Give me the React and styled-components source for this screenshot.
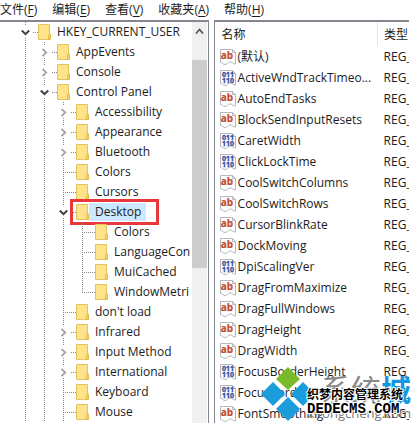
import React from "react";
import styled, { createGlobalStyle } from "styled-components";

const menus = [
  { label: "文件", accessKey: "F" },
  { label: "编辑", accessKey: "E" },
  { label: "查看", accessKey: "V" },
  { label: "收藏夹", accessKey: "A" },
  { label: "帮助", accessKey: "H" },
];

// cells: one entry per indent level, the last one belongs to the key itself
const keys = [
  { name: "HKEY_CURRENT_USER", cells: ["open"] },
  { name: "AppEvents", cells: ["line", "closed"] },
  { name: "Console", cells: ["line", "closed"] },
  { name: "Control Panel", cells: ["line", "open"] },
  { name: "Accessibility", cells: ["line", "line", "closed"] },
  { name: "Appearance", cells: ["line", "line", "closed"] },
  { name: "Bluetooth", cells: ["line", "line", "closed"] },
  { name: "Colors", cells: ["line", "line", "leaf"] },
  { name: "Cursors", cells: ["line", "line", "leaf"] },
  { name: "Desktop", cells: ["line", "line", "open"], selected: true },
  { name: "Colors", cells: ["line", "line", "line", "leaf"] },
  { name: "LanguageCon", cells: ["line", "line", "line", "leaf"] },
  { name: "MuiCached", cells: ["line", "line", "line", "leaf"] },
  { name: "WindowMetri", cells: ["line", "line", "line", "last"] },
  { name: "don't load", cells: ["line", "line", "leaf"] },
  { name: "Infrared", cells: ["line", "line", "closed"] },
  { name: "Input Method", cells: ["line", "line", "closed"] },
  { name: "International", cells: ["line", "line", "closed"] },
  { name: "Keyboard", cells: ["line", "line", "leaf"] },
  { name: "Mouse", cells: ["line", "line", "leaf"] },
];

const values = [
  { name: "(默认)" },
  { name: "ActiveWndTrackTimeo...", binary: true },
  { name: "AutoEndTasks" },
  { name: "BlockSendInputResets" },
  { name: "CaretWidth", binary: true },
  { name: "ClickLockTime", binary: true },
  { name: "CoolSwitchColumns" },
  { name: "CoolSwitchRows" },
  { name: "CursorBlinkRate" },
  { name: "DockMoving" },
  { name: "DpiScalingVer", binary: true },
  { name: "DragFromMaximize" },
  { name: "DragFullWindows" },
  { name: "DragHeight" },
  { name: "DragWidth" },
  { name: "FocusBorderHeight", binary: true },
  { name: "FocusBorderWidth", binary: true },
  { name: "FontSmoothing" },
];

function Chevron({ open }) {
  return (
    <svg width="9" height="9" viewBox="0 0 9 9" fill="none">
      {open ? (
        <path d="M0.8 2.5 L4.5 6.2 L8.2 2.5" stroke="#404040" strokeWidth="2" />
      ) : (
        <path d="M2.5 0.8 L6.2 4.5 L2.5 8.2" stroke="#a6a6a6" strokeWidth="1.9" />
      )}
    </svg>
  );
}

function FolderIcon() {
  return (
    <FolderSvg width="13" height="16" viewBox="0 0 13 16">
      <path d="M0.5 0.5 H11.5 V10 L12.5 11 V15.5 H0.5 Z" fill="#ffe38a" stroke="#e3c45c" />
      <path d="M10.5 15 V11 L12 9.5 V15 Z" fill="#ffe88f" stroke="#d9b540" strokeWidth="0.8" />
    </FolderSvg>
  );
}

function ValueIcon({ binary }) {
  return (
    <ValueSvg width="16" height="16" viewBox="0 0 16 16">
      <path
        d="M0.5 0.5 H12.5 L15.5 3.5 V15 C13 15.5 12.5 12.5 10 13 C7.5 13.5 7.5 15.5 5 15.5 C3 15.5 2.5 13.5 0.5 13.5 Z"
        fill="#fdfdfd"
        stroke="#b4b8ba"
      />
      <path d="M12.5 0.5 V3.5 H15.5" fill="none" stroke="#b4b8ba" />
      {binary ? (
        <g fill="#2f4f9e" stroke="#2f4f9e" strokeWidth="0.3" fontSize="7" textAnchor="middle">
          <text x="8" y="7">011</text>
          <text x="8" y="13">110</text>
        </g>
      ) : (
        <text x="7" y="10" fill="#c84c2c" stroke="#c84c2c" strokeWidth="0.2" fontSize="10" textAnchor="middle">
          ab
        </text>
      )}
    </ValueSvg>
  );
}

function TreeRow({ item }) {
  return (
    <Row>
      {item.cells.map((kind, i) =>
        kind === "open" || kind === "closed" ? (
          <Expander key={i} type="button" aria-label={`Toggle ${item.name}`} $open={kind === "open"}>
            <Chevron open={kind === "open"} />
          </Expander>
        ) : (
          <Guide key={i} $kind={kind} />
        )
      )}
      <Connector />
      <FolderIcon />
      <KeyName $selected={item.selected}>{item.name}</KeyName>
      {item.selected && <Highlight />}
    </Row>
  );
}

function SiteMark() {
  return (
    <Mark>
      <svg width="54" height="54" viewBox="0 0 54 54">
        <path d="M27 0 L39 12 L27 23 L15 12 Z" fill="#7ab929" />
        <path d="M12 15 L24 27 L12 39 L0 27 Z" fill="#1b9ddb" />
        <path d="M42 15 L54 27 L42 39 L30 27 Z" fill="#1b9ddb" />
        <path d="M27 30 L39 42 L27 54 L15 42 Z" fill="#1b9ddb" />
      </svg>
      <MarkText>
        <MarkTitle>
          系统<b>城</b>
        </MarkTitle>
        <MarkUrl>xitongcheng.com</MarkUrl>
      </MarkText>
      <Stamp>
        <StampTitle>织梦内容管理系统</StampTitle>
        <StampUrl>DEDECMS.COM</StampUrl>
      </Stamp>
    </Mark>
  );
}

function App() {
  return (
    <>
      <GlobalStyle />
      <Window>
        <MenuBar>
          {menus.map((menu) => (
            <MenuButton key={menu.label} type="button">
              {menu.label}(<u>{menu.accessKey}</u>)
            </MenuButton>
          ))}
        </MenuBar>
        <Panes>
          <TreePane>
            <Tree>
              {keys.map((item, i) => (
                <TreeRow key={i} item={item} />
              ))}
            </Tree>
            <ScrollBar>
              <ScrollButton type="button" aria-label="Scroll up">
                <svg width="9" height="7" viewBox="0 0 9 7" fill="none">
                  <path d="M1 5.5 L4.5 1.5 L8 5.5" stroke="#555" strokeWidth="1.8" />
                </svg>
              </ScrollButton>
              <ScrollThumb />
            </ScrollBar>
          </TreePane>
          <ValuePane>
            <Table>
              <thead>
                <tr>
                  <NameHead>名称</NameHead>
                  <TypeHead>类型</TypeHead>
                </tr>
              </thead>
              <tbody>
                {values.map((value) => (
                  <tr key={value.name}>
                    <Cell>
                      <ValueName>
                        <ValueIcon binary={value.binary} />
                        {value.name}
                      </ValueName>
                    </Cell>
                    <TypeCell>REG_</TypeCell>
                  </tr>
                ))}
              </tbody>
            </Table>
          </ValuePane>
        </Panes>
        <SiteMark />
      </Window>
    </>
  );
}

export default App;

const GlobalStyle = createGlobalStyle`
  * {
    box-sizing: border-box;
  }

  body {
    margin: 0;
    background: #fff;
    color: #1c1c1c;
    font-family: "Open Sans", "Noto Sans CJK SC", sans-serif;
    font-size: 12px;
  }

  button {
    padding: 0;
    border: none;
    background: none;
    color: inherit;
    font: inherit;
  }
`;

const Window = styled.div`
  position: relative;
  height: 100vh;
  display: flex;
  flex-direction: column;
  padding-right: 6px;
  overflow: hidden;
`;

const MenuBar = styled.nav`
  display: flex;
  flex: none;
  gap: 15px;
  height: 20px;
`;

const MenuButton = styled.button`
  line-height: 20px;
  white-space: nowrap;

  u {
    text-underline-offset: 2px;
  }
`;

const Panes = styled.main`
  display: flex;
  flex: 1;
  gap: 5px;
  min-height: 0;
`;

const TreePane = styled.section`
  display: flex;
  flex: 0 0 51%;
  min-width: 0;
  border-top: 2px solid #828790;
  border-right: 1px solid #828790;
`;

const Tree = styled.ul`
  flex: 1;
  min-width: 0;
  margin: 0;
  padding: 0 0 0 16px;
  overflow: hidden;
  list-style: none;
`;

const Row = styled.li`
  position: relative;
  display: flex;
  align-items: center;
  height: 20px;
  white-space: nowrap;
`;

const dotsDown = "repeating-linear-gradient(#888 0 1px, transparent 1px 2px)";
const dotsAcross = "repeating-linear-gradient(90deg, #888 0 1px, transparent 1px 2px)";

const Guide = styled.span`
  flex: none;
  width: 19px;
  height: 20px;
  background-image: ${dotsDown}, ${dotsAcross};
  background-repeat: no-repeat;
  background-position: 9px 0, 9px 10px;
  background-size:
    1px ${(p) => (p.$kind === "last" ? "10px" : "20px")},
    ${(p) => (p.$kind === "line" ? "0 0" : "10px 1px")};
`;

const Expander = styled.button`
  display: flex;
  flex: none;
  align-items: center;
  justify-content: center;
  width: 19px;
  height: 20px;
  background-image: ${dotsDown}, ${dotsDown}, ${dotsAcross};
  background-repeat: no-repeat;
  background-position: 9px 0, 9px 16px, 17px 10px;
  background-size: 1px 4px, 1px 4px, 2px 1px;
`;

const Connector = styled.span`
  flex: none;
  width: 3px;
  height: 1px;
  background: ${dotsAcross};
`;

const FolderSvg = styled.svg`
  flex: none;
`;

const KeyName = styled.span`
  padding: 0 5px 0 6px;
  line-height: 18px;
  background: ${(p) => (p.$selected ? "#cce8ff" : "transparent")};
`;

const Highlight = styled.span`
  position: absolute;
  top: -3px;
  left: 54px;
  width: 89px;
  height: 26px;
  border: 3px solid #e8383c;
`;

const ScrollBar = styled.div`
  flex: none;
  width: 16px;
  border-right: 1px solid #fff;
  background: #f0f0f0;
`;

const ScrollButton = styled.button`
  display: flex;
  align-items: center;
  justify-content: center;
  width: 100%;
  height: 19px;
  margin-bottom: 19px;
`;

const ScrollThumb = styled.div`
  height: 208px;
  background: #cdcdcd;
`;

const ValuePane = styled.section`
  flex: 1;
  min-width: 0;
  border-top: 2px solid #828790;
  border-left: 1px solid #828790;
  overflow: hidden;
`;

const Table = styled.table`
  width: 100%;
  table-layout: fixed;
  border-collapse: collapse;
`;

const NameHead = styled.th`
  width: 163px;
  height: 24px;
  padding: 0 0 0 7px;
  border-right: 1px solid #e5e5e5;
  font-weight: 400;
  text-align: left;
`;

const TypeHead = styled.th`
  padding: 0 0 0 6px;
  overflow: hidden;
  font-weight: 400;
  text-align: left;
  white-space: nowrap;
`;

const Cell = styled.td`
  height: 21px;
  padding: 0 0 0 5px;
  line-height: 20px;
`;

const TypeCell = styled(Cell)`
  padding-left: 6px;
  overflow: hidden;
  white-space: nowrap;
`;

const ValueName = styled.div`
  display: flex;
  align-items: center;
  gap: 2px;
  white-space: nowrap;
`;

const ValueSvg = styled.svg`
  flex: none;
  font-family: "Open Sans", sans-serif;
  font-weight: 700;
`;

const Mark = styled.div`
  position: absolute;
  right: 4px;
  bottom: 0;
  display: flex;
  align-items: flex-start;
  width: 150px;
  height: 56px;
  line-height: 1;
  white-space: nowrap;
`;

const MarkText = styled.div`
  position: absolute;
  right: 0;
  top: 8px;
  text-align: right;
`;

const MarkTitle = styled.div`
  color: #8a8a8a;
  font-size: 30px;
  line-height: 30px;

  b {
    color: #1596e0;
    font-weight: 700;
  }
`;

const MarkUrl = styled.div`
  color: #777;
  font-size: 13px;
  line-height: 16px;
`;

const Stamp = styled.div`
  position: absolute;
  left: 46px;
  top: 20px;
  color: #000;
  font-weight: 700;
  -webkit-text-stroke: 2px #fff;
  paint-order: stroke fill;
`;

const StampTitle = styled.div`
  font-size: 12px;
  line-height: 16px;
`;

const StampUrl = styled.div`
  font-family: "Liberation Mono", monospace;
  font-size: 14px;
  line-height: 12px;
`;
